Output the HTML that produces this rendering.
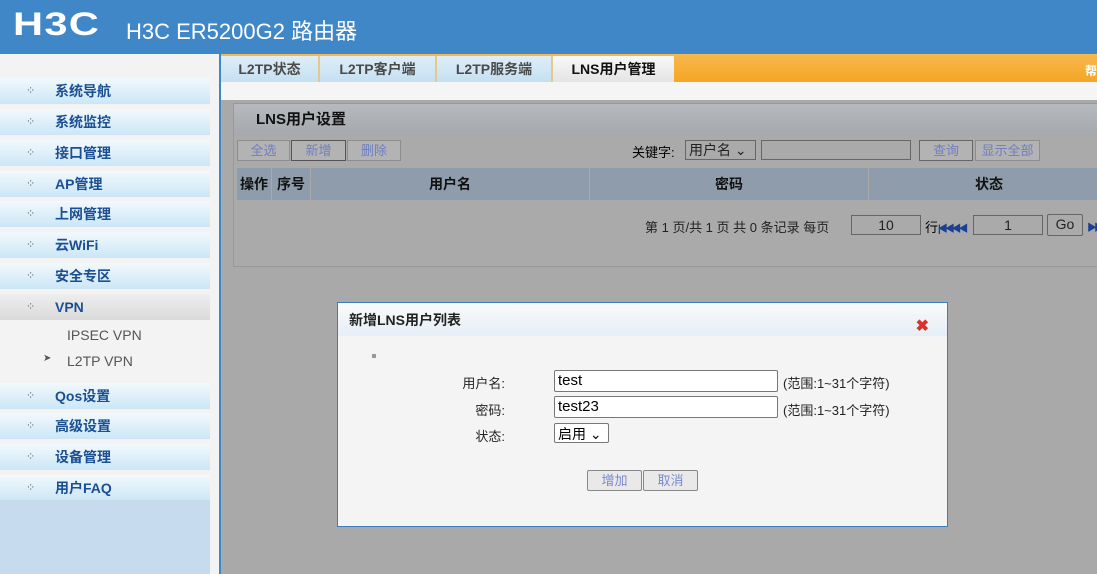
<!DOCTYPE html>
<html><head><meta charset="utf-8"><style>
*{margin:0;padding:0;box-sizing:border-box}
body{width:1097px;height:574px;overflow:hidden;position:relative;font-family:"Liberation Sans","Noto Sans CJK SC",sans-serif;background:#a9a9a9;font-size:14px}
.hdr{position:absolute;left:0;top:0;width:1097px;height:54px;background:#3f87c7;color:#fff}
.logo{position:absolute;left:13px;top:6px;font-size:32px;font-weight:bold;letter-spacing:1px;font-family:"Liberation Sans",sans-serif;transform:scaleX(1.3);transform-origin:left}
.title{position:absolute;left:126px;top:14px;font-size:22px}
.side{position:absolute;left:0;top:54px;width:219px;height:520px;background:#f3f3f3}
.vline{position:absolute;left:219px;top:54px;width:2px;height:520px;background:#3f87c7}
.item{position:absolute;left:0;width:210px;height:26px;background:linear-gradient(#f2f9fd,#cbe6f6);color:#1b4f93;font-weight:bold;font-size:14px;line-height:26px;padding-left:55px}
.item:before{content:"⁘";position:absolute;left:26px;color:#666;font-size:11px;font-weight:normal}
.vpn{background:linear-gradient(#eeeeee,#dadada)}
.sub{position:absolute;left:67px;color:#555;font-size:14px}
.bot{position:absolute;left:0;top:500px;width:210px;height:74px;background:#c6dcee}
.tabs{position:absolute;left:221px;top:54px;width:876px;height:28px;background:linear-gradient(#f7b84f,#f5a623)}
.tab{position:absolute;top:2px;height:26px;background:linear-gradient(#dfeef8,#c4e0f1);color:#4a4a4a;font-weight:bold;font-size:14px;line-height:26px;text-align:center;border-right:2px solid #e8c88a}
.strip{position:absolute;left:221px;top:82px;width:876px;height:18px;background:#f5f5f5}
.panel{position:absolute;left:233px;top:103px;width:870px;height:164px;border:1px solid #999;background:#aaaaaa}
.ph{height:31px;background:linear-gradient(#b6b9bd,#a5a9ae);font-weight:bold;font-size:15px;line-height:32px;padding-left:22px;color:#111}
.btn{position:absolute;height:21px;border:1px solid #8d8d8d;background:#b3b3b3;color:#6f7fc0;font-size:13px;line-height:19px;text-align:center}
.th{position:absolute;top:64px;height:32px;background:#8e9cab;font-weight:bold;line-height:32px;text-align:center;color:#111}
.inp{position:absolute;border:1px solid #666;background:#aaa;height:20px;font-size:14px;line-height:18px;text-align:center;color:#222}
.modal{position:absolute;left:337px;top:302px;width:611px;height:225px;border:1px solid #3a7ec0;background:#f4f4f4}
.mh{height:33px;background:linear-gradient(#fafafa,#e6eef6);font-weight:bold;font-size:14px;line-height:34px;padding-left:11px;color:#222}
.lbl{position:absolute;font-size:13px;color:#222;text-align:right;width:80px}
.fi{position:absolute;left:216px;width:224px;height:22px;border:1px solid #777;background:#fff;font-size:15px;line-height:20px;padding-left:3px;border-radius:2px}
.hint{position:absolute;left:445px;font-size:13px;color:#222}
.mb{position:absolute;top:167px;width:55px;height:21px;border:1px solid #888;background:#e9e9e9;color:#7a8ad0;font-size:13px;line-height:19px;text-align:center;border-radius:2px}
.ar{color:#1b3f93;font-size:10px;font-weight:bold;letter-spacing:-3px}
</style></head><body>
<div class="hdr"><div class="logo">H3C</div><div class="title">H3C ER5200G2 路由器</div></div>
<div class="side">
<div class="item" style="top:24px">系统导航</div>
<div class="item" style="top:55px">系统监控</div>
<div class="item" style="top:86px">接口管理</div>
<div class="item" style="top:117px">AP管理</div>
<div class="item" style="top:147px">上网管理</div>
<div class="item" style="top:178px">云WiFi</div>
<div class="item" style="top:209px">安全专区</div>
<div class="item vpn" style="top:240px">VPN</div>
<div class="sub" style="top:273px">IPSEC VPN</div>
<div class="sub" style="top:299px"><span style="position:absolute;left:-24px;font-size:10px">➤</span>L2TP VPN</div>
<div class="item" style="top:329px">Qos设置</div>
<div class="item" style="top:359px">高级设置</div>
<div class="item" style="top:390px">设备管理</div>
<div class="item" style="top:421px">用户FAQ</div>
</div>
<div class="bot"></div>
<div class="vline"></div>
<div class="tabs">
<div class="tab" style="left:0;width:99px">L2TP状态</div>
<div class="tab" style="left:99px;width:117px">L2TP客户端</div>
<div class="tab" style="left:216px;width:116px">L2TP服务端</div>
<div class="tab" style="left:332px;width:121px;background:linear-gradient(#f8f8f8,#e4e4e4);color:#111;border:none">LNS用户管理</div>
<div style="position:absolute;right:0;top:8px;color:#fff;font-size:12px;font-weight:bold">帮</div>
</div>
<div class="strip"></div>
<div class="panel">
<div class="ph">LNS用户设置</div>
<div class="btn" style="left:3px;top:36px;width:53px">全选</div>
<div class="btn" style="left:57px;top:36px;width:55px;border-color:#555">新增</div>
<div class="btn" style="left:113px;top:36px;width:54px">删除</div>
<div style="position:absolute;left:398px;top:38px;font-size:13px">关键字:</div>
<div class="inp" style="left:451px;top:36px;width:71px;text-align:left;padding-left:3px">用户名 ⌄</div>
<div class="inp" style="left:527px;top:36px;width:150px"></div>
<div class="btn" style="left:685px;top:36px;width:54px;border-color:#666">查询</div>
<div class="btn" style="left:741px;top:36px;width:65px">显示全部</div>
<div class="th" style="left:3px;width:34px">操作</div>
<div class="th" style="left:38px;width:38px">序号</div>
<div class="th" style="left:77px;width:278px">用户名</div>
<div class="th" style="left:356px;width:278px">密码</div>
<div class="th" style="left:635px;width:240px">状态</div>
<div style="position:absolute;left:411px;top:113px;font-size:13px;color:#222">第 1 页/共 1 页 共 0 条记录 每页</div>
<div class="inp" style="left:617px;top:111px;width:70px">10</div>
<div style="position:absolute;left:691px;top:113px;font-size:13px">行<span class="ar">|◀◀ &nbsp;◀◀</span></div>
<div class="inp" style="left:739px;top:111px;width:70px">1</div>
<div class="inp" style="left:813px;top:110px;width:36px;height:22px;border-radius:2px">Go</div>
<div style="position:absolute;left:853px;top:115px" class="ar">▶▶</div>
</div>
<div class="modal">
<div class="mh">新增LNS用户列表<span style="position:absolute;right:18px;top:7px;color:#d9342b;font-size:16px">✖</span></div>
<div style="position:absolute;left:34px;top:50px;font-size:8px;color:#999">▘</div>
<div class="lbl" style="left:87px;top:70px">用户名:</div>
<div class="fi" style="top:67px">test</div>
<div class="hint" style="top:70px">(范围:1~31个字符)</div>
<div class="lbl" style="left:87px;top:97px">密码:</div>
<div class="fi" style="top:93px">test23</div>
<div class="hint" style="top:97px">(范围:1~31个字符)</div>
<div class="lbl" style="left:87px;top:123px">状态:</div>
<div class="fi" style="top:120px;width:55px;height:20px;font-size:14px">启用 ⌄</div>
<div class="mb" style="left:249px">增加</div>
<div class="mb" style="left:305px">取消</div>
</div>
</body></html>
